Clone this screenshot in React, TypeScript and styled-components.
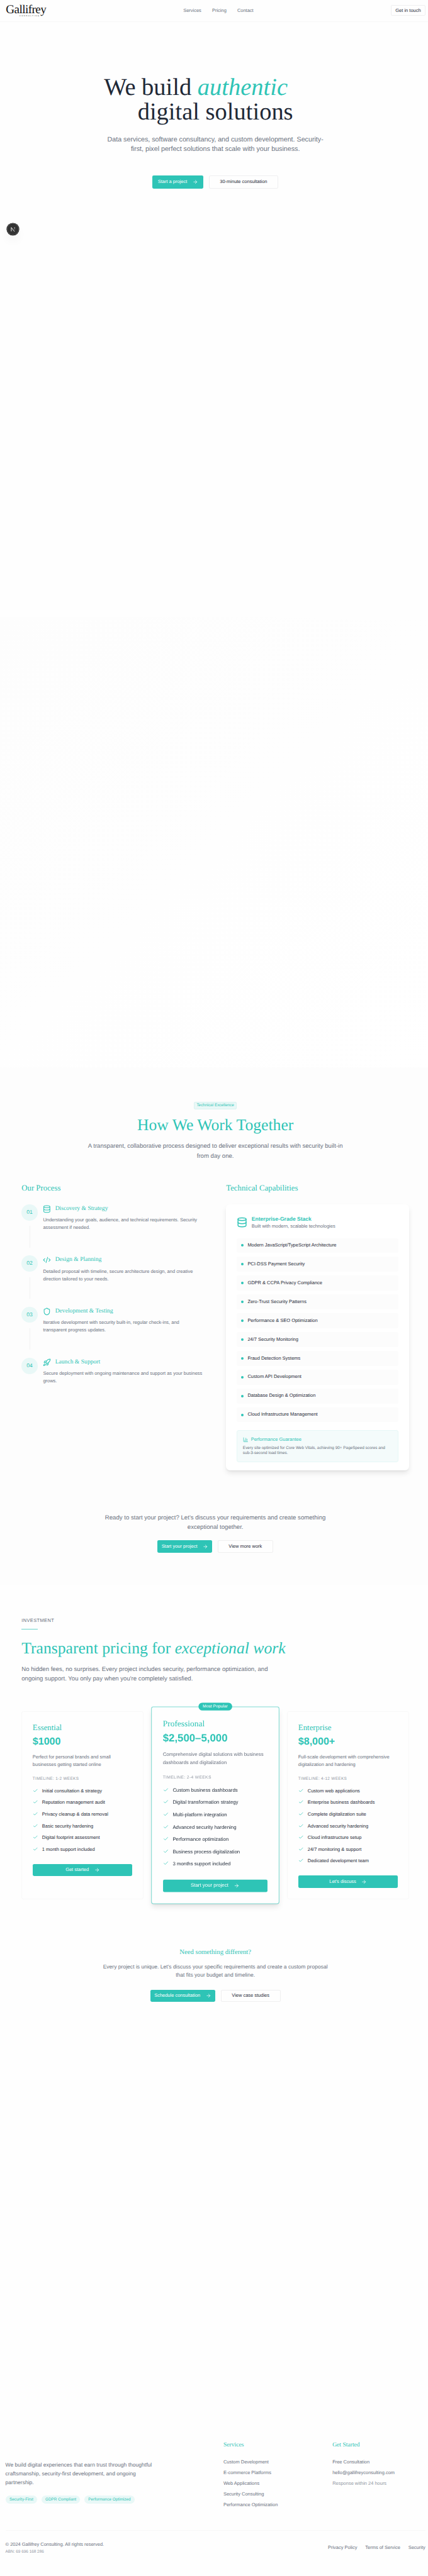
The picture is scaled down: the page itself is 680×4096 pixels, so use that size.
import React from 'react';
import styled, { createGlobalStyle, css } from 'styled-components';
import { ArrowRight, ChartColumn, Check, Code, Database, Rocket, Shield } from 'lucide-react';

/* Design units are converted to page pixels: x() for widths and type, y() for heights. */
const x = (n: number) => `${((n * 680) / 1272).toFixed(3)}px`;
const y = (n: number) => `${((n * 4096) / 7657).toFixed(3)}px`;

const teal = '#2ec4b6';
const ink = '#1f2937';
const gray = '#6b7280';
const faint = '#9298a4';
const sans = '"Liberation Sans", Arial, sans-serif';
const serif = '"Liberation Serif", "Times New Roman", serif';

const GlobalStyle = createGlobalStyle`
  *, *::before, *::after { box-sizing: border-box; }
  body { margin: 0; background: #fefefe; overflow-x: hidden; }
  h1, h2, h3, h4, p, ul { margin: 0; padding: 0; font-weight: 400; }
  ul { list-style: none; }
  svg { display: block; flex: none; }
`;

const Viewport = styled.div`
  width: 100%;
  height: 4096px;
  overflow: hidden;
`;

const Page = styled.div`
  width: ${x(1280)};
  font-family: ${sans};
  font-size: ${x(14)};
  line-height: ${y(20)};
  color: ${gray};
  text-rendering: geometricPrecision;
  white-space: nowrap;
`;

/* ---------- shared parts ---------- */

const Icon = styled.span<{ $size: number }>`
  flex: none;
  svg {
    width: ${(p) => x(p.$size)};
    height: ${(p) => x(p.$size)};
  }
`;

const buttonBase = css`
  display: flex;
  align-items: center;
  justify-content: center;
  border-radius: ${x(4)};
  font-size: ${x(14)};
  line-height: ${y(20)};
`;

const Primary = styled.a<{ $w?: number; $h?: number }>`
  ${buttonBase}
  width: ${(p) => (p.$w ? x(p.$w) : '100%')};
  height: ${(p) => y(p.$h ?? 36)};
  gap: ${x(16)};
  background: ${teal};
  color: #fff;
`;

const Outline = styled.a<{ $w: number; $h?: number }>`
  ${buttonBase}
  width: ${(p) => x(p.$w)};
  height: ${(p) => y(p.$h ?? 36)};
  border: 1px solid #efeff0;
  background: #fefefe;
  color: ${ink};
`;

const Actions = styled.div`
  display: flex;
  justify-content: center;
  gap: ${x(16)};
`;

const Lead = styled.p<{ $size?: number; $line?: number; $top?: number }>`
  margin-top: ${(p) => y(p.$top ?? 0)};
  font-size: ${(p) => x(p.$size ?? 18)};
  line-height: ${(p) => y(p.$line ?? 29.25)};
`;

/* ---------- header ---------- */

const Header = styled.header`
  display: grid;
  grid-template-columns: 1fr auto 1fr;
  align-items: center;
  height: ${y(65)};
  padding: 0 ${x(16)};
  border-bottom: 1px solid #f7f7f7;
`;

const Logo = styled.a`
  display: flex;
  flex-direction: column;
  padding-left: ${x(1.5)};
  color: #111;
  font-family: ${serif};
`;

const LogoName = styled.span`
  font-size: ${x(36)};
  line-height: ${y(30)};
  letter-spacing: ${x(-1.15)};
  margin-top: ${y(3)};
`;

const LogoTag = styled.span`
  margin-left: ${x(40)};
  font-family: ${sans};
  font-size: ${x(5.6)};
  line-height: ${y(7)};
  margin-top: ${y(-1)};
  letter-spacing: ${x(2.5)};
  color: #444;
`;

const Nav = styled.nav`
  display: flex;
  gap: ${x(32)};
  padding-left: ${x(18)};
`;

const HeaderEnd = styled.div`
  display: flex;
  justify-content: flex-end;
`;

/* ---------- hero ---------- */

const Hero = styled.section`
  position: relative;
  height: ${y(1769)};
  padding-top: ${y(159.6)};
  text-align: center;
`;

const HeroTitle = styled.h1`
  font-family: ${serif};
  font-size: ${x(72)};
  line-height: ${y(72)};
  color: ${ink};
`;

const HeroLine = styled.span<{ $shift?: number }>`
  display: block;
  padding-right: ${(p) => x(p.$shift ?? 0)};
  em { color: ${teal}; }
`;

const HeroActions = styled(Actions)`
  margin-top: ${y(63.5)};
`;

const DevBadge = styled.div`
  position: absolute;
  left: ${x(20)};
  top: ${y(599)};
  width: ${x(36)};
  height: ${x(36)};
  border-radius: 50%;
  background: #333;
  box-shadow: 0 0 0 0.6px #111, inset 0 0 0 0.6px #666, 0 ${y(16)} ${y(32)} -${y(8)} rgba(0, 0, 0, 0.14);
  svg { width: 100%; height: 100%; }
`;

const Services = styled.section`
  height: ${y(1338)};
  background: linear-gradient(135deg, #fdfdfd, #ffffff);
`;

/* ---------- process ---------- */

const Process = styled.section`
  height: ${y(1539)};
  padding-top: ${y(103)};
  background: #fdfdfd;
`;

const SectionHead = styled.div`
  display: flex;
  flex-direction: column;
  align-items: center;
  height: ${y(241.3)};
  text-align: center;
`;

const Tag = styled.span`
  width: ${x(128)};
  height: ${y(22.7)};
  border: 1px solid #d9f3f1;
  border-radius: ${x(4)};
  background: #e9f8f7;
  color: ${teal};
  font-size: ${x(12)};
  line-height: calc(${y(22.7)} - 2px);
  text-align: center;
`;

const Title = styled.h2<{ $top: number }>`
  margin-top: ${(p) => y(p.$top)};
  font-family: ${serif};
  font-size: ${x(48)};
  line-height: ${y(48)};
  color: ${teal};
`;

const Columns = styled.div`
  display: grid;
  grid-template-columns: ${x(544)} ${x(544)};
  column-gap: ${x(64)};
  padding: 0 ${x(64)};
`;

const ColumnTitle = styled.h3`
  margin-bottom: ${y(31.7)};
  font-family: ${serif};
  font-size: ${x(24)};
  line-height: ${y(32)};
  color: ${teal};
`;

const Step = styled.li`
  display: flex;
  gap: ${x(16)};
  height: ${y(152)};
`;

const StepRail = styled.div`
  display: flex;
  flex-direction: column;
  align-items: center;
  gap: ${y(16)};
`;

const StepNumber = styled.span`
  width: ${x(48)};
  height: ${y(48)};
  border-radius: 50%;
  background: #e9f8f7;
  color: ${teal};
  font-size: ${x(16)};
  line-height: ${y(48)};
  text-align: center;
`;

const StepLine = styled.span`
  width: 1px;
  height: ${y(64)};
  background: #f2f2f2;
`;

const StepTitle = styled.h4`
  display: flex;
  align-items: center;
  gap: ${x(12)};
  height: ${y(28)};
  margin-bottom: ${y(8)};
  font-family: ${serif};
  font-size: ${x(18)};
  color: ${teal};
`;

const SmallText = styled.p`
  font-size: ${x(14)};
  line-height: ${y(22.75)};
`;

const StackCard = styled.div`
  height: ${y(790)};
  padding: ${y(32)} ${x(32)} 0;
  border-radius: ${x(12)};
  background: #ffffff;
  box-shadow: 0 ${y(10)} ${y(15)} -${y(3)} rgba(0, 0, 0, 0.1), 0 ${y(4)} ${y(6)} -${y(4)} rgba(0, 0, 0, 0.1);
`;

const StackHead = styled.div`
  display: flex;
  align-items: center;
  gap: ${x(12)};
  height: ${y(44)};
  margin-bottom: ${y(24)};
  color: ${teal};
`;

const StackName = styled.div`
  font-size: ${x(16)};
  font-weight: 700;
  line-height: ${y(24)};
`;

const StackNote = styled.div`
  line-height: ${y(20)};
  color: ${gray};
`;

const StackList = styled.ul`
  display: grid;
  row-gap: ${y(12)};
`;

const StackItem = styled.li`
  display: flex;
  align-items: center;
  gap: ${x(12)};
  height: ${y(44)};
  padding: 0 ${x(12)};
  border-radius: ${x(6)};
  background: #fcfcfc;
  color: ${ink};
  &::before {
    content: '';
    width: ${x(8)};
    height: ${x(8)};
    border-radius: 50%;
    background: ${teal};
  }
`;

const Guarantee = styled.div`
  height: ${y(94)};
  margin-top: ${y(24)};
  padding: ${y(16)} ${x(16)} 0;
  border: 1px solid #e6f7f6;
  border-radius: ${x(6)};
  background: #f4fbfb;
  font-size: ${x(12)};
  line-height: ${y(16)};
`;

const GuaranteeTitle = styled.div`
  display: flex;
  align-items: center;
  gap: ${x(8)};
  margin-bottom: ${y(8)};
  font-size: ${x(14)};
  line-height: ${y(20)};
  color: ${teal};
`;

const ProcessCta = styled.div`
  padding-top: ${y(127.5)};
  text-align: center;
  ${Actions} { margin-top: ${y(23)}; }
`;

/* ---------- pricing ---------- */

const Pricing = styled.section`
  height: ${y(2545)};
  padding: ${y(96.5)} ${x(64)} 0;
`;

const Eyebrow = styled.div`
  letter-spacing: 0.05em;
  &::after {
    content: '';
    display: block;
    width: ${x(48)};
    height: 1px;
    margin-top: ${y(15)};
    background: #6bd5cb;
  }
`;

const Plans = styled.div`
  display: grid;
  grid-template-columns: repeat(3, 1fr);
  column-gap: ${x(32)};
  height: ${y(558.3)};
  margin-top: ${y(80.1)};
`;

const Plan = styled.article<{ $featured?: boolean }>`
  position: relative;
  padding: ${y(33)} ${x(33)} 0;
  border: 1px solid ${(p) => (p.$featured ? '#7fdad2' : '#f8f8f8')};
  border-radius: ${x(6)};
  background: #fefefe;
  ${(p) =>
    p.$featured &&
    css`
      transform: scale(1.05);
      box-shadow: 0 ${y(10)} ${y(15)} -${y(3)} rgba(0, 0, 0, 0.1), 0 ${y(4)} ${y(6)} -${y(4)} rgba(0, 0, 0, 0.1);
    `}
`;

const Popular = styled.span`
  position: absolute;
  left: 50%;
  top: ${y(-13)};
  width: ${x(95)};
  height: ${y(22.5)};
  transform: translateX(-50%);
  border-radius: ${y(12)};
  background: ${teal};
  color: #fff;
  font-size: ${x(12)};
  line-height: ${y(22.5)};
  text-align: center;
`;

const PlanBody = styled.div`
  margin: -1px;
`;

const PlanName = styled.h3`
  font-family: ${serif};
  font-size: ${x(24)};
  line-height: ${y(32)};
  color: ${teal};
`;

const Price = styled.div`
  margin: ${y(8)} 0 ${y(16)};
  font-size: ${x(30)};
  font-weight: 700;
  line-height: ${y(36)};
  color: ${teal};
`;

const Timeline = styled.div`
  margin: ${y(23.5)} 0 ${y(16)};
  font-size: ${x(12)};
  line-height: ${y(16)};
  letter-spacing: 0.05em;
  color: ${faint};
`;

const Features = styled.ul`
  display: grid;
  row-gap: ${y(12)};
  margin-bottom: ${y(32)};
`;

const Feature = styled.li`
  display: flex;
  gap: ${x(12)};
  height: ${y(22.75)};
  line-height: ${y(22.75)};
  color: ${ink};
  svg { color: ${teal}; margin-top: ${y(2)}; }
`;

const Custom = styled.div`
  padding-top: ${y(145)};
  text-align: center;
  ${Actions} { margin-top: ${y(32)}; }
`;

const CustomTitle = styled.h3`
  font-family: ${serif};
  font-size: ${x(20)};
  line-height: ${y(28)};
  color: ${teal};
`;

/* ---------- footer ---------- */

const Footer = styled.footer`
  padding: 0 ${x(16)};
`;

const FooterTop = styled.div`
  display: grid;
  grid-template-columns: ${x(648)} ${x(324)} 1fr;
  height: ${y(265)};
`;

const About = styled.div`
  padding-top: ${y(59.5)};
`;

const Pills = styled.div`
  display: flex;
  gap: ${x(12)};
  margin-top: ${y(23.5)};
`;

const Pill = styled.span`
  height: ${y(24.5)};
  padding: 0 ${x(12)};
  border-radius: ${y(12.5)};
  background: #e9f8f7;
  color: ${teal};
  font-size: ${x(12)};
  line-height: ${y(24.5)};
`;

const FooterTitle = styled.h4`
  margin-bottom: ${y(25.3)};
  font-family: ${serif};
  font-size: ${x(18)};
  line-height: ${y(28)};
  color: ${teal};
`;

const Links = styled.ul`
  display: grid;
  row-gap: ${y(12)};
`;

const LinkItem = styled.li<{ $muted?: boolean }>`
  color: ${(p) => (p.$muted ? faint : gray)};
`;

const FooterBottom = styled.div`
  display: flex;
  justify-content: space-between;
  padding-top: ${y(31.5)};
  border-top: 1px solid #f8f8f8;
`;

const Abn = styled.div`
  margin-top: ${y(4)};
  font-size: ${x(12)};
  line-height: ${y(16)};
  color: ${faint};
`;

const Legal = styled.div`
  display: flex;
  gap: ${x(24)};
  padding-top: ${y(10)};
`;

/* ---------- data ---------- */

const steps = [
  { icon: Database, title: 'Discovery & Strategy', text: ['Understanding your goals, audience, and technical requirements. Security', 'assessment if needed.'] },
  { icon: Code, title: 'Design & Planning', text: ['Detailed proposal with timeline, secure architecture design, and creative', 'direction tailored to your needs.'] },
  { icon: Shield, title: 'Development & Testing', text: ['Iterative development with security built-in, regular check-ins, and', 'transparent progress updates.'] },
  { icon: Rocket, title: 'Launch & Support', text: ['Secure deployment with ongoing maintenance and support as your business', 'grows.'] },
];

/* Code brackets with a slash between them. */
const CodeSlash = () => (
  <svg viewBox="0 0 24 24" fill="none" stroke="currentColor" strokeWidth="2" strokeLinecap="round" strokeLinejoin="round">
    <path d="m18 16 4-4-4-4" />
    <path d="m6 8-4 4 4 4" />
    <path d="m14.5 4-5 16" />
  </svg>
);

const stack = [
  'Modern JavaScript/TypeScript Architecture',
  'PCI-DSS Payment Security',
  'GDPR & CCPA Privacy Compliance',
  'Zero-Trust Security Patterns',
  'Performance & SEO Optimization',
  '24/7 Security Monitoring',
  'Fraud Detection Systems',
  'Custom API Development',
  'Database Design & Optimization',
  'Cloud Infrastructure Management',
];

const plans = [
  {
    name: 'Essential',
    price: '$1000',
    text: ['Perfect for personal brands and small', 'businesses getting started online'],
    timeline: 'TIMELINE: 1-2 WEEKS',
    features: ['Initial consultation & strategy', 'Reputation management audit', 'Privacy cleanup & data removal', 'Basic security hardening', 'Digital footprint assessment', '1 month support included'],
    action: 'Get started',
  },
  {
    name: 'Professional',
    price: '$2,500–5,000',
    text: ['Comprehensive digital solutions with business', 'dashboards and digitalization'],
    timeline: 'TIMELINE: 2-4 WEEKS',
    features: ['Custom business dashboards', 'Digital transformation strategy', 'Multi-platform integration', 'Advanced security hardening', 'Performance optimization', 'Business process digitalization', '3 months support included'],
    action: 'Start your project',
    featured: true,
  },
  {
    name: 'Enterprise',
    price: '$8,000+',
    text: ['Full-scale development with comprehensive', 'digitalization and hardening'],
    timeline: 'TIMELINE: 4-12 WEEKS',
    features: ['Custom web applications', 'Enterprise business dashboards', 'Complete digitalization suite', 'Advanced security hardening', 'Cloud infrastructure setup', '24/7 monitoring & support', 'Dedicated development team'],
    action: "Let's discuss",
  },
];

const Arrow = () => (
  <Icon $size={16}>
    <ArrowRight strokeWidth={2} />
  </Icon>
);

const Lines = ({ of }: { of: string[] }) => (
  <>
    {of.map((line, i) => (
      <React.Fragment key={line}>
        {i > 0 && <br />}
        {line}
      </React.Fragment>
    ))}
  </>
);

export default function App() {
  return (
    <Viewport>
      <GlobalStyle />
      <Page>
        <Header>
          <Logo>
            <LogoName>Gallifrey</LogoName>
            <LogoTag>CONSULTING</LogoTag>
          </Logo>
          <Nav>
            <span>Services</span>
            <span>Pricing</span>
            <span>Contact</span>
          </Nav>
          <HeaderEnd>
            <Outline $w={102} $h={32}>Get in touch</Outline>
          </HeaderEnd>
        </Header>

        <Hero>
          <HeroTitle>
            <HeroLine $shift={116}>
              We build <em>authentic</em>
            </HeroLine>
            <HeroLine>digital solutions</HeroLine>
          </HeroTitle>
          <Lead $size={20} $line={28} $top={33}>
            <Lines of={['Data services, software consultancy, and custom development. Security-', 'first, pixel perfect solutions that scale with your business.']} />
          </Lead>
          <HeroActions>
            <Primary $w={151.5} $h={40}>Start a project<Arrow /></Primary>
            <Outline $w={207} $h={40}>30-minute consultation</Outline>
          </HeroActions>
          <DevBadge>
            <svg viewBox="0 0 36 36" fill="none">
              <defs>
                <linearGradient id="stem" x1="0" y1="12" x2="0" y2="21" gradientUnits="userSpaceOnUse">
                  <stop stopColor="#fff" />
                  <stop offset="1" stopColor="#fff" stopOpacity="0" />
                </linearGradient>
              </defs>
              <path d="M13 24V12.6L22.6 24.6" stroke="#fff" strokeWidth="1.7" />
              <path d="M22.7 12V21" stroke="url(#stem)" strokeWidth="1.7" />
            </svg>
          </DevBadge>
        </Hero>

        <Services />

        <Process>
          <SectionHead>
            <Tag>Technical Excellence</Tag>
            <Title $top={23.1}>How We Work Together</Title>
            <Lead $line={29.5} $top={24.2}>
              <Lines of={['A transparent, collaborative process designed to deliver exceptional results with security built-in', 'from day one.']} />
            </Lead>
          </SectionHead>
          <Columns>
            <div>
              <ColumnTitle>Our Process</ColumnTitle>
              <ul>
                {steps.map(({ icon: StepIcon, title, text }, i) => (
                  <Step key={title}>
                    <StepRail>
                      <StepNumber>0{i + 1}</StepNumber>
                      {i < steps.length - 1 && <StepLine />}
                    </StepRail>
                    <div>
                      <StepTitle>
                        <Icon $size={24}>{StepIcon === Code ? <CodeSlash /> : <StepIcon strokeWidth={2} />}</Icon>
                        {title}
                      </StepTitle>
                      <SmallText><Lines of={text} /></SmallText>
                    </div>
                  </Step>
                ))}
              </ul>
            </div>
            <div>
              <ColumnTitle>Technical Capabilities</ColumnTitle>
              <StackCard>
                <StackHead>
                  <Icon $size={32}><Database strokeWidth={2} /></Icon>
                  <div>
                    <StackName>Enterprise-Grade Stack</StackName>
                    <StackNote>Built with modern, scalable technologies</StackNote>
                  </div>
                </StackHead>
                <StackList>
                  {stack.map((item) => (
                    <StackItem key={item}>{item}</StackItem>
                  ))}
                </StackList>
                <Guarantee>
                  <GuaranteeTitle>
                    <Icon $size={16}><ChartColumn /></Icon>
                    Performance Guarantee
                  </GuaranteeTitle>
                  <Lines of={['Every site optimized for Core Web Vitals, achieving 90+ PageSpeed scores and', 'sub-3-second load times.']} />
                </Guarantee>
              </StackCard>
            </div>
          </Columns>
          <ProcessCta>
            <Lead>
              <Lines of={["Ready to start your project? Let's discuss your requirements and create something", 'exceptional together.']} />
            </Lead>
            <Actions>
              <Primary $w={162.5}>Start your project<Arrow /></Primary>
              <Outline $w={165.5}>View more work</Outline>
            </Actions>
          </ProcessCta>
        </Process>

        <Pricing>
          <Eyebrow>INVESTMENT</Eyebrow>
          <Title $top={31.5}>
            Transparent pricing for <em>exceptional work</em>
          </Title>
          <Lead $top={24.2}>
            <Lines of={['No hidden fees, no surprises. Every project includes security, performance optimization, and', "ongoing support. You only pay when you're completely satisfied."]} />
          </Lead>
          <Plans>
            {plans.map((plan) => (
              <Plan key={plan.name} $featured={plan.featured}>
                {plan.featured && <Popular>Most Popular</Popular>}
                <PlanBody>
                  <PlanName>{plan.name}</PlanName>
                  <Price>{plan.price}</Price>
                  <SmallText><Lines of={plan.text} /></SmallText>
                  <Timeline>{plan.timeline}</Timeline>
                  <Features>
                    {plan.features.map((feature) => (
                      <Feature key={feature}>
                        <Icon $size={16}><Check strokeWidth={2} /></Icon>
                        {feature}
                      </Feature>
                    ))}
                  </Features>
                  <Primary>{plan.action}<Arrow /></Primary>
                </PlanBody>
              </Plan>
            ))}
          </Plans>
          <Custom>
            <CustomTitle>Need something different?</CustomTitle>
            <Lead $size={16} $line={24} $top={16.5}>
              <Lines of={["Every project is unique. Let's discuss your specific requirements and create a custom proposal", 'that fits your budget and timeline.']} />
            </Lead>
            <Actions>
              <Primary $w={193.5}>Schedule consultation<Arrow /></Primary>
              <Outline $w={178}>View case studies</Outline>
            </Actions>
          </Custom>
        </Pricing>

        <Footer>
          <FooterTop>
            <About>
              <Lead $size={16} $line={26}>
                <Lines of={['We build digital experiences that earn trust through thoughtful', 'craftsmanship, security-first development, and ongoing', 'partnership.']} />
              </Lead>
              <Pills>
                <Pill>Security-First</Pill>
                <Pill>GDPR Compliant</Pill>
                <Pill>Performance Optimized</Pill>
              </Pills>
            </About>
            <div>
              <FooterTitle>Services</FooterTitle>
              <Links>
                <LinkItem>Custom Development</LinkItem>
                <LinkItem>E-commerce Platforms</LinkItem>
                <LinkItem>Web Applications</LinkItem>
                <LinkItem>Security Consulting</LinkItem>
                <LinkItem>Performance Optimization</LinkItem>
              </Links>
            </div>
            <div>
              <FooterTitle>Get Started</FooterTitle>
              <Links>
                <LinkItem>Free Consultation</LinkItem>
                <LinkItem>hello@gallifreyconsulting.com</LinkItem>
                <LinkItem $muted>Response within 24 hours</LinkItem>
              </Links>
            </div>
          </FooterTop>
          <FooterBottom>
            <div>
              <div>© 2024 Gallifrey Consulting. All rights reserved.</div>
              <Abn>ABN: 69 696 168 286</Abn>
            </div>
            <Legal>
              <span>Privacy Policy</span>
              <span>Terms of Service</span>
              <span>Security</span>
            </Legal>
          </FooterBottom>
        </Footer>
      </Page>
    </Viewport>
  );
}
